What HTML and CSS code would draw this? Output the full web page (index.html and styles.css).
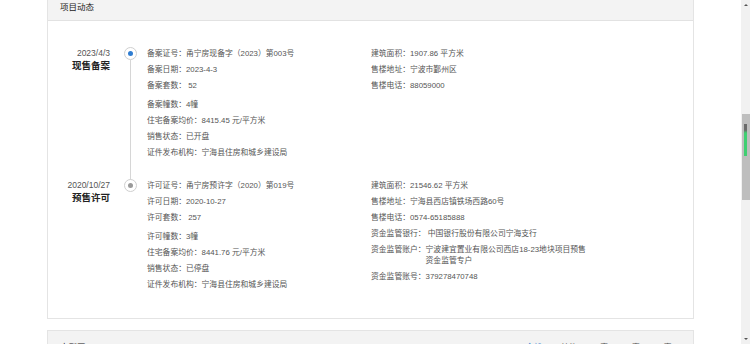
FILE: index.html
```html
<!DOCTYPE html>
<html lang="zh-CN">
<head>
    <meta charset="UTF-8">
    <title>项目动态</title>
    <link rel="stylesheet" href="styles.css">
</head>
<body>
    <div class="page">
        <!-- 项目动态 -->
        <div class="panel">
            <div class="panel-head">项目动态</div>
            <div class="panel-body">
                <div class="entry">
                    <div class="entry-date">
                        <div class="date">2023/4/3</div>
                        <div class="kind">现售备案</div>
                    </div>
                    <div class="entry-dot">
                        <span class="dot dot-blue"></span>
                        <span class="line"></span>
                    </div>
                    <div class="entry-info">
                        <ul class="fields">
                            <li>备案证号：甬宁房现备字（2023）第003号</li>
                            <li>备案日期：2023-4-3</li>
                            <li>备案套数： 52</li>
                            <li class="gap">备案幢数：4幢</li>
                            <li>住宅备案均价：8415.45 元/平方米</li>
                            <li>销售状态：已开盘</li>
                            <li>证件发布机构：宁海县住房和城乡建设局</li>
                        </ul>
                        <ul class="fields">
                            <li>建筑面积：1907.86 平方米</li>
                            <li>售楼地址：宁波市鄞州区</li>
                            <li>售楼电话：88059000</li>
                        </ul>
                    </div>
                </div>

                <div class="entry entry-last">
                    <div class="entry-date">
                        <div class="date">2020/10/27</div>
                        <div class="kind">预售许可</div>
                    </div>
                    <div class="entry-dot">
                        <span class="dot dot-grey"></span>
                    </div>
                    <div class="entry-info">
                        <ul class="fields">
                            <li>许可证号：甬宁房预许字（2020）第019号</li>
                            <li>许可日期：2020-10-27</li>
                            <li>许可套数： 257</li>
                            <li class="gap">许可幢数：3幢</li>
                            <li>住宅备案均价：8441.76 元/平方米</li>
                            <li>销售状态：已停盘</li>
                            <li>证件发布机构：宁海县住房和城乡建设局</li>
                        </ul>
                        <ul class="fields">
                            <li>建筑面积：21546.62 平方米</li>
                            <li>售楼地址：宁海县西店镇铁场西路60号</li>
                            <li>售楼电话：0574-65185888</li>
                            <li>资金监管银行： 中国银行股份有限公司宁海支行</li>
                            <li class="split">
                                <span>资金监管账户：</span>
                                <span>宁波建宜置业有限公司西店18-23地块项目预售<br>资金监管专户</span>
                            </li>
                            <li>资金监管账号：379278470748</li>
                        </ul>
                    </div>
                </div>
            </div>
        </div>

        <!-- 户型图 -->
        <div class="panel panel-next">
            <div class="panel-head panel-head-next">
                <span>户型图</span>
                <div class="tabs">
                    <span class="tab active">全部(3)</span>
                    <span class="tab">其他(2)</span>
                    <span class="tab">1室(1)</span>
                    <span class="tab">3室(1)</span>
                    <span class="tab">4室(1)</span>
                </div>
            </div>
        </div>
    </div>

    <!-- 滚动条 -->
    <div class="scrollbar">
        <span class="arrow arrow-up"></span>
        <div class="thumb"><span class="thumb-mark"></span></div>
        <span class="arrow arrow-down"></span>
    </div>
</body>
</html>
```

FILE: styles.css
```css
* {
    margin: 0;
    padding: 0;
    box-sizing: border-box;
}

body {
    display: flex;
    width: 750px;
    height: 344px;
    overflow: hidden;
    background: #fff;
    font-family: "Liberation Sans", "Noto Sans CJK SC", sans-serif;
    color: #555;
}

.page {
    flex: 1;
    padding-left: 47px;
}

/* Paneles */
.panel {
    width: 647px;
    border: 1px solid #e4e4e4;
    border-top: none;
}

.panel-head {
    height: 21px;
    padding: 2px 0 0 12px;
    background: #f3f3f3;
    border-bottom: 1px solid #e2e2e2;
    font-size: 8.5px;
    line-height: 11px;
    color: #222;
}

.panel-body {
    padding: 27px 0 28px;
}

.panel-next {
    margin-top: 11px;
    border-top: 1px solid #e4e4e4;
}

.panel-head-next {
    height: 30px;
    padding-top: 11px;
    display: flex;
    justify-content: space-between;
    padding-right: 12px;
}

.tabs {
    display: flex;
    gap: 10px;
    font-size: 7.8px;
    color: #555;
}

.tab.active {
    color: #3a7fd2;
}

/* Linea de tiempo */
.entry {
    display: flex;
    padding-bottom: 22px;
}

.entry-last {
    padding-bottom: 0;
}

.entry-date {
    width: 62px;
    text-align: right;
}

.date {
    font-size: 8.5px;
    line-height: 11px;
    color: #555;
}

.kind {
    font-size: 9.5px;
    line-height: 14px;
    font-weight: bold;
    color: #222;
}

.entry-dot {
    width: 37px;
    padding-left: 14px;
    display: flex;
    flex-direction: column;
}

.dot {
    width: 13px;
    height: 13px;
    margin-top: -1px;
    border: 1px solid #cfcfcf;
    border-radius: 50%;
    background: #fff;
    display: flex;
    align-items: center;
    justify-content: center;
}

.dot::after {
    content: "";
    width: 5px;
    height: 5px;
    border-radius: 50%;
}

.dot-blue::after {
    background: #2f7dd1;
}

.dot-grey::after {
    background: #9a9a9a;
}

.line {
    flex: 1;
    width: 1px;
    margin-left: 6px;
    margin-bottom: -23px;
    background: #d6d6d6;
}

.entry-info {
    display: flex;
}

.fields {
    list-style: none;
    width: 224px;
    font-size: 7.8px;
    line-height: 11px;
}

.fields li {
    margin-bottom: 5px;
}

.fields li:last-child {
    margin-bottom: 0;
}

.fields li.gap {
    padding-top: 3px;
}

.fields li.split {
    display: flex;
}

/* Barra de desplazamiento */
.scrollbar {
    width: 9px;
    margin-left: 1px;
    background: #f1f1f1;
    display: flex;
    flex-direction: column;
    align-items: center;
}

.arrow {
    width: 0;
    height: 0;
    border-left: 2px solid transparent;
    border-right: 2px solid transparent;
}

.arrow-up {
    margin-top: 4px;
    border-bottom: 2px solid #555;
}

.arrow-down {
    margin-top: auto;
    margin-bottom: 4px;
    border-top: 2px solid #555;
}

.thumb {
    width: 8px;
    height: 86px;
    margin-top: 108px;
    background: #bebebe;
    display: flex;
    justify-content: center;
    padding-top: 10px;
}

.thumb-mark {
    width: 3px;
    height: 32px;
    background: linear-gradient(#6a6a6a 0, #6a6a6a 6px, #3fcf72 9px, #3fcf72 100%);
}
```
